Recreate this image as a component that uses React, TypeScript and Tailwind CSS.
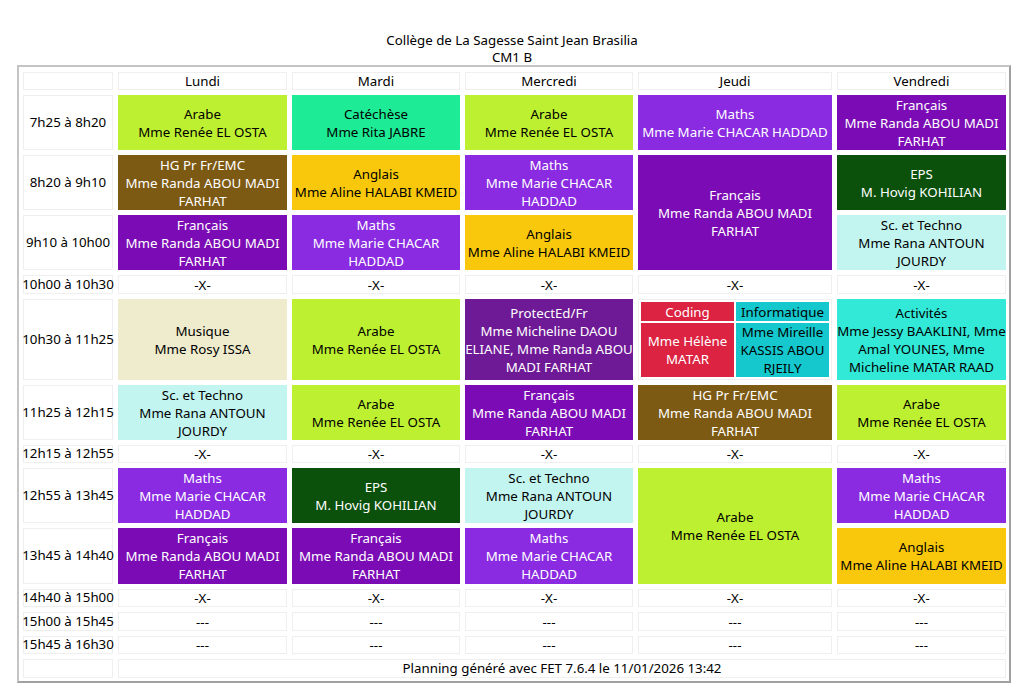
import React from 'react';

type Slot = {
  lines: string[];
  tone: string;
  tall?: boolean;
  nested?: boolean;
};

const white = 'bg-white text-black border border-[#efefef]';
const arabe = 'bg-[#bef032] text-black';
const cate = 'bg-[#1eeb96] text-black';
const hg = 'bg-[#7d5a14] text-white';
const anglais = 'bg-[#f9c80c] text-black';
const maths = 'bg-[#8a2be2] text-white';
const francais = 'bg-[#7b0cb5] text-white';
const eps = 'bg-[#0b500b] text-white';
const sciences = 'bg-[#c3f5f0] text-black';
const musique = 'bg-[#eeeccd] text-black';
const protect = 'bg-[#6e1996] text-white';
const activites = 'bg-[#32e8d7] text-black';

const ARABE = ['Arabe', 'Mme Renée EL OSTA'];
const FR = ['Français', 'Mme Randa ABOU MADI', 'FARHAT'];
const MATHS = ['Maths', 'Mme Marie CHACAR', 'HADDAD'];
const ANG = ['Anglais', 'Mme Aline HALABI KMEID'];
const SCI = ['Sc. et Techno', 'Mme Rana ANTOUN', 'JOURDY'];
const EPS = ['EPS', 'M. Hovig KOHILIAN'];
const HG = ['HG Pr Fr/EMC', 'Mme Randa ABOU MADI', 'FARHAT'];

const pause = (txt: string): Slot[] => [1, 2, 3, 4, 5].map(() => ({ lines: [txt], tone: white }));

const rows: { time: string; slots: Slot[] }[] = [
  {
    time: '7h25 à 8h20',
    slots: [
      { lines: ARABE, tone: arabe },
      { lines: ['Catéchèse', 'Mme Rita JABRE'], tone: cate },
      { lines: ARABE, tone: arabe },
      { lines: ['Maths', 'Mme Marie CHACAR HADDAD'], tone: maths },
      { lines: FR, tone: francais },
    ],
  },
  {
    time: '8h20 à 9h10',
    slots: [
      { lines: HG, tone: hg },
      { lines: ANG, tone: anglais },
      { lines: MATHS, tone: maths },
      { lines: FR, tone: francais, tall: true },
      { lines: EPS, tone: eps },
    ],
  },
  {
    time: '9h10 à 10h00',
    slots: [
      { lines: FR, tone: francais },
      { lines: MATHS, tone: maths },
      { lines: ANG, tone: anglais },
      { lines: SCI, tone: sciences },
    ],
  },
  { time: '10h00 à 10h30', slots: pause('-X-') },
  {
    time: '10h30 à 11h25',
    slots: [
      { lines: ['Musique', 'Mme Rosy ISSA'], tone: musique },
      { lines: ARABE, tone: arabe },
      {
        lines: ['ProtectEd/Fr', 'Mme Micheline DAOU', 'ELIANE, Mme Randa ABOU', 'MADI FARHAT'],
        tone: protect,
      },
      { lines: [], tone: white, nested: true },
      {
        lines: ['Activités', 'Mme Jessy BAAKLINI, Mme', 'Amal YOUNES, Mme', 'Micheline MATAR RAAD'],
        tone: activites,
      },
    ],
  },
  {
    time: '11h25 à 12h15',
    slots: [
      { lines: SCI, tone: sciences },
      { lines: ARABE, tone: arabe },
      { lines: FR, tone: francais },
      { lines: HG, tone: hg },
      { lines: ARABE, tone: arabe },
    ],
  },
  { time: '12h15 à 12h55', slots: pause('-X-') },
  {
    time: '12h55 à 13h45',
    slots: [
      { lines: MATHS, tone: maths },
      { lines: EPS, tone: eps },
      { lines: SCI, tone: sciences },
      { lines: ARABE, tone: arabe, tall: true },
      { lines: MATHS, tone: maths },
    ],
  },
  {
    time: '13h45 à 14h40',
    slots: [
      { lines: FR, tone: francais },
      { lines: FR, tone: francais },
      { lines: MATHS, tone: maths },
      { lines: ANG, tone: anglais },
    ],
  },
  { time: '14h40 à 15h00', slots: pause('-X-') },
  { time: '15h00 à 15h45', slots: pause('---') },
  { time: '15h45 à 16h30', slots: pause('---') },
];

function Lines({ lines }: { lines: string[] }) {
  return (
    <>
      {lines.map((l, i) => (
        <span key={i} className="block">
          {l}
        </span>
      ))}
    </>
  );
}

function SplitSlot() {
  // Jeudi 10h30: two groups sharing the slot
  return (
    <div className="bg-white border border-[#efefef] p-[2px]">
      <div className="grid h-full grid-cols-2 grid-rows-[19px_1fr] gap-[2px] text-center leading-[18px]">
        <div className="flex items-center justify-center bg-[#dc2341] text-white">Coding</div>
        <div className="flex items-center justify-center bg-[#14c8cd] text-black">Informatique</div>
        <div className="flex flex-col items-center justify-center bg-[#dc2341] text-white">
          <Lines lines={['Mme Hélène', 'MATAR']} />
        </div>
        <div className="flex flex-col items-center justify-center bg-[#14c8cd] text-black">
          <Lines lines={['Mme Mireille', 'KASSIS ABOU', 'RJEILY']} />
        </div>
      </div>
    </div>
  );
}

function Cell({ slot }: { slot: Slot }) {
  if (slot.nested) return <SplitSlot />;
  return (
    <div
      className={`${slot.tone} ${slot.tall ? 'row-span-2' : ''} flex flex-col items-center justify-center text-center leading-[18px]`}
    >
      <Lines lines={slot.lines} />
    </div>
  );
}

export default function App() {
  const days = ['Lundi', 'Mardi', 'Mercredi', 'Jeudi', 'Vendredi'];

  return (
    <div className="min-h-[699px] bg-white font-['Noto_Sans',sans-serif] text-[13.3px] text-black whitespace-nowrap">
      <div className="pt-[32px] text-center leading-[17px]">
        <div>Collège de La Sagesse Saint Jean Brasilia</div>
        <div className="-mb-px">CM1 B</div>
      </div>

      <div className="ml-[17px] w-[994px] border-2 border-t-[#c4c4c4] border-l-[#c4c4c4] border-r-[#a0a0a0] border-b-[#a0a0a0] pl-[4px] pr-[3px] pt-[5px] pb-[3px]">
        <div className="grid grid-cols-[90px_169px_168px_168px_194px_169px] grid-rows-[18px_55px_55px_55px_19px_81px_55px_18px_55px_56px_18px_19px_18px_19px] gap-[5px]">
          <div className={white} />
          {days.map((d) => (
            <div key={d} className={`${white} flex items-center justify-center pt-px`}>
              {d}
            </div>
          ))}

          {rows.map((row) => (
            <React.Fragment key={row.time}>
              <div className={`${white} flex items-center justify-center`}>{row.time}</div>
              {row.slots.map((s, i) => (
                <Cell key={i} slot={s} />
              ))}
            </React.Fragment>
          ))}

          <div className={white} />
          <div className={`${white} col-span-5 flex items-center justify-center`}>
            Planning généré avec FET 7.6.4 le 11/01/2026 13:42
          </div>
        </div>
      </div>
    </div>
  );
}
